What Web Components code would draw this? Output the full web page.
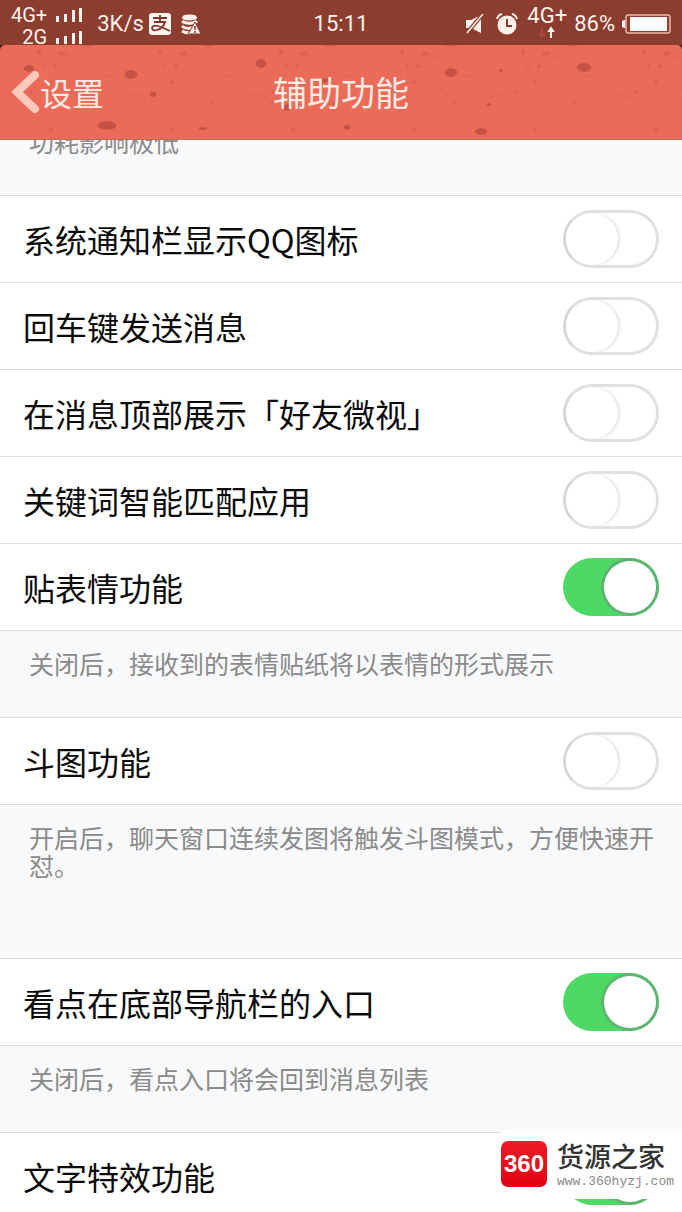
<!DOCTYPE html>
<html lang="zh-CN">
<head>
<meta charset="utf-8">
<meta name="viewport" content="width=device-width, initial-scale=1">
<title>辅助功能</title>
<style>
  body { margin: 0; background: #f8f9fb; color: #0a0a0a; font-family: Roboto, "Noto Sans CJK SC", sans-serif; }
</style>
</head>
<body>
<settings-screen></settings-screen>

<template id="status-bar">
  <style>
    :host { display: grid; grid-template-columns: 1fr auto 1fr; align-items: center; height: 45px; padding: 0 11px; background: #8b3d2f; color: #fff1ea; font: 22px/24px Roboto, sans-serif; }
    svg { display: block; flex: none; }
    .side { display: flex; align-items: center; }
    .right { justify-content: flex-end; }
    .sims { display: grid; grid-template-columns: auto auto; column-gap: 8px; align-items: center; justify-items: end; font-size: 20px; line-height: 22px; padding-top: 4px; margin-right: 14px; }
    .speed { margin-right: 5px; }
    .pay { margin-right: 10px; }
    .mute { margin-right: 11px; }
    .alarm { margin-right: 9px; }
    .net { display: flex; flex-direction: column; align-items: center; line-height: 20px; margin-right: 7px; height: 36px; }
    .pct { margin-right: 7px; }
  </style>
  <div class="side">
    <div class="sims">
      <span>4G+</span>
      <svg width="28" height="16" viewBox="0 0 28 16" fill="#fff1ea"><path d="M1 9h3v6H1zM9 7h3v8H9zM17 3h3v12h-3zM24 1h3v14h-3z"/></svg>
      <span>2G</span>
      <svg width="28" height="16" viewBox="0 0 28 16" fill="#fff1ea"><path d="M1 9h3v6H1zM9 7h3v8H9zM17 4h3v11h-3zM24 2h3v13h-3z"/></svg>
    </div>
    <span class="speed">3K/s</span>
    <svg class="pay" width="22" height="22" viewBox="0 0 22 22"><rect width="22" height="22" rx="3" fill="#fff3ee"/><g fill="none" stroke="#7c3428" stroke-width="1.800"><path d="M4 5h14M11 2v7M5 9h11c-1 4-4 7-8 8-3 1-5 0-5-2s3-3 6-2c4 1 8 3 12 5"/></g></svg>
    <svg width="20" height="21" viewBox="0 0 20 21"><g fill="none" stroke="#fff1ea" stroke-width="3"><ellipse cx="8.500" cy="3.500" rx="6" ry="1.500"/><path d="M1 7c3 3 12 3 15 0M1 12c3 3 8 3 12 1M1 17c3 2 6 2 8 2"/></g><path d="M14 8l6 12H7z" fill="#fff1ea" stroke="#8b3d2f"/><path d="M14 12v4M14 17v2" stroke="#8b3d2f" stroke-width="1.500"/></svg>
  </div>
  <time>15:11</time>
  <div class="side right">
    <svg class="mute" width="20" height="20" viewBox="0 0 20 20"><path d="M1 6h5l10-5v18L6 14H1z" fill="#fff1ea"/><path d="M2 19L17 1" stroke="#8b3d2f" stroke-width="4"/><path d="M2 19L18 0" stroke="#fff1ea" stroke-width="1.500"/></svg>
    <svg class="alarm" width="22" height="22" viewBox="0 0 22 22"><circle cx="11" cy="12" r="9.500" fill="#fff1ea"/><path d="M1 6q1-4 5-5M21 6q-1-4-5-5" fill="none" stroke="#fff1ea" stroke-width="2"/><path d="M11 6v7h5" fill="none" stroke="#8b3d2f" stroke-width="2"/></svg>
    <div class="net"><span>4G+</span><svg width="20" height="12" viewBox="0 0 20 12"><path d="M5 1v9M2 7l3 3 3-3" fill="none" stroke="#a8493b" stroke-width="2"/><path d="M14 12V4M12 5l2-3 2 3z" fill="#fff1ea" stroke="#fff1ea" stroke-width="2"/></svg></div>
    <span class="pct">86%</span>
    <svg width="49" height="20" viewBox="0 0 49 20"><path d="M3 6v8H2q-2 0-2-2V8q0-2 2-2z" fill="#fff1ea"/><rect x="4" y="1" width="44" height="18" rx="2" fill="none" stroke="#efb9aa" stroke-width="1.500"/><path d="M8 3h37v14H8z" fill="#fff"/></svg>
  </div>
</template>

<template id="nav-header">
  <style>
    :host { display: block; position: relative; z-index: 1; background: #3b1712; }
    .bar { position: relative; display: grid; grid-template-columns: 1fr auto 1fr; align-items: center; height: 94px; padding: 0 11px; border-bottom: 1px solid #c9675a; border-radius: 5px 5px 0 0; overflow: hidden; background: #e96b58; color: #ffeae2; font-family: "Noto Sans CJK SC", sans-serif; }
    .clay { position: absolute; inset: 0; width: 100%; height: 100%; }
    button { position: relative; justify-self: start; display: flex; align-items: center; border: 0; padding: 0; background: none; color: inherit; font: inherit; font-size: 32px; line-height: 44px; }
    h1 { position: relative; margin: 0; font-size: 34px; line-height: 48px; font-weight: 400; }
  </style>
  <header class="bar">
    <svg class="clay" viewBox="0 0 682 95" preserveAspectRatio="xMidYMid slice" aria-hidden="true">
      <defs><pattern id="grain" width="121" height="95" patternUnits="userSpaceOnUse">
        <g fill="#cf5546" opacity=".5"><ellipse cx="39" cy="7" rx="2" ry="3"/><ellipse cx="62" cy="9" rx="4" ry="2"/><circle cx="55" cy="22" r="2"/><circle cx="44" cy="22" r="1.500"/><circle cx="51" cy="38" r="2"/><circle cx="31" cy="48" r="1.500"/><circle cx="91" cy="59" r="1.500"/><circle cx="51" cy="85" r="2"/><ellipse cx="88" cy="1" rx="6" ry="1.500"/></g>
        <path d="M67 10l8 4M75 45q6 0 11 6M29 59l7-6M5 53q12-6 20 1M100 30q8 3 15-1" fill="none" stroke="#d25b4b" stroke-width="1.500" opacity=".35"/>
      </pattern></defs>
      <rect width="682" height="95" fill="url(#grain)"/>
      <g fill="#c65145" stroke="#b84b3e" stroke-opacity=".4">
        <ellipse cx="29" cy="24" rx="5" ry="3"/><ellipse cx="131" cy="30" rx="6" ry="4"/><ellipse cx="153" cy="50" rx="3" ry="2"/><ellipse cx="107" cy="81" rx="9" ry="4"/><ellipse cx="203" cy="84" rx="4" ry="1"/><ellipse cx="261" cy="19" rx="5" ry="4"/><ellipse cx="325" cy="36" rx="3" ry="2"/><ellipse cx="287" cy="63" rx="3" ry="3"/><ellipse cx="347" cy="83" rx="3" ry="2"/><ellipse cx="451" cy="28" rx="6" ry="4"/><circle cx="501" cy="26" r="1.500"/><ellipse cx="489" cy="60" rx="2" ry="1"/><ellipse cx="481" cy="87" rx="6" ry="3"/><ellipse cx="584" cy="23" rx="7" ry="4"/>
      </g>
    </svg>
    <button type="button"><svg width="29" height="44" viewBox="0 0 29 44" aria-hidden="true"><path d="M24 5L6 22l18 17" fill="none" stroke="#ffc9bb" stroke-width="8" stroke-linecap="round" stroke-linejoin="miter"/></svg><slot name="back"></slot></button>
    <h1><slot></slot></h1>
  </header>
</template>

<template id="setting-row">
  <style>
    :host { display: block; background: #fff; border-top: 1px solid #dcddde; }
    label { display: flex; align-items: center; justify-content: space-between; height: 86px; padding: 0 23px; font: 32px/48px "Noto Sans CJK SC", sans-serif; }
    input { appearance: none; position: relative; flex: none; box-sizing: border-box; width: 96px; height: 58px; margin: 0; border: 3px solid #e0e0e0; border-left-color: #d6d6d6; border-radius: 29px; background: #fff; }
    input::before { content: ""; position: absolute; top: 0; left: 0; width: 52px; height: 52px; border-radius: 50%; background: #fff; box-shadow: 2px 0 3px #e2e2e2; }
    input:checked { overflow: hidden; border-width: 0; background: #4cd964; }
    input:checked::before { top: 3px; left: auto; right: 3px; box-shadow: 0 0 0 3px #5fb474; }
  </style>
  <label><span><slot></slot></span><input type="checkbox" role="switch"></label>
</template>

<template id="setting-note">
  <style>
    :host { display: block; border-top: 1px solid #dcddde; background: #f8f9fb; }
    p { margin: 0; padding: 18px 24px 40px 29px; font: 25px/28px "Noto Sans CJK SC", sans-serif; color: #8a8a8a; }
    :host([spaced]) p { padding-bottom: 79px; }
  </style>
  <p><slot></slot></p>
</template>

<template id="site-mark">
  <style>
    :host { position: absolute; right: 0; bottom: 13px; display: flex; align-items: center; gap: 10px; height: 70px; padding: 0 8px 0 3px; background: #fff; border-radius: 10px 0 0 0; }
    .logo { display: grid; place-items: center; width: 46px; height: 46px; border-radius: 7px; background: linear-gradient(#ec1c28, #e20013); color: #fff; font: bold 24px/46px "Liberation Sans", sans-serif; }
    .text { display: flex; flex-direction: column; }
    .cn { font: 500 27px/36px "Noto Sans CJK SC", sans-serif; color: #333; }
    .url { font: 13px/16px "Liberation Mono", monospace; color: #888; }
  </style>
  <span class="logo">360</span>
  <span class="text"><span class="cn">货源之家</span><span class="url">www.360hyzj.com</span></span>
</template>

<template id="settings-screen">
  <style>
    :host { position: relative; display: flex; flex-direction: column; height: 100vh; overflow: hidden; }
    status-bar, nav-header { flex: none; }
    main { flex: 1; min-height: 0; overflow: hidden; }
    .list { margin-top: -32px; }
  </style>
  <status-bar></status-bar>
  <nav-header><span slot="back">设置</span>辅助功能</nav-header>
  <main><div class="list">
    <setting-note>功耗影响极低</setting-note>
    <setting-row>系统通知栏显示QQ图标</setting-row>
    <setting-row>回车键发送消息</setting-row>
    <setting-row>在消息顶部展示「好友微视」</setting-row>
    <setting-row>关键词智能匹配应用</setting-row>
    <setting-row checked>贴表情功能</setting-row>
    <setting-note>关闭后，接收到的表情贴纸将以表情的形式展示</setting-note>
    <setting-row>斗图功能</setting-row>
    <setting-note spaced>开启后，聊天窗口连续发图将触发斗图模式，方便快速开怼。</setting-note>
    <setting-row checked>看点在底部导航栏的入口</setting-row>
    <setting-note>关闭后，看点入口将会回到消息列表</setting-note>
    <setting-row checked>文字特效功能</setting-row>
  </div></main>
  <site-mark></site-mark>
</template>

<script>
  class TemplateElement extends HTMLElement {
    constructor() {
      super();
      const template = document.getElementById(this.localName);
      this.attachShadow({ mode: "open" }).append(template.content.cloneNode(true));
    }
  }
  class SettingRow extends TemplateElement {
    connectedCallback() {
      const input = this.shadowRoot.querySelector("input");
      input.checked = this.hasAttribute("checked");
      input.setAttribute("aria-label", this.textContent);
    }
  }
  customElements.define("status-bar", class extends TemplateElement {});
  customElements.define("nav-header", class extends TemplateElement {});
  customElements.define("setting-row", SettingRow);
  customElements.define("setting-note", class extends TemplateElement {});
  customElements.define("site-mark", class extends TemplateElement {});
  customElements.define("settings-screen", class extends TemplateElement {});
</script>
</body>
</html>
